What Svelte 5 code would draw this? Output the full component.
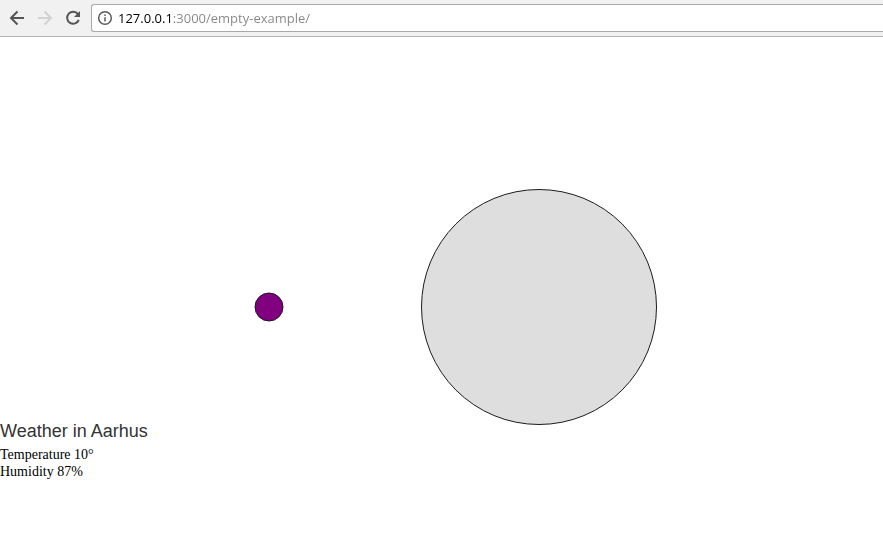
<script>
  let address = $state('127.0.0.1:3000/empty-example/');
  const weather = { city: 'Aarhus', temperature: 10, humidity: 87 };
</script>

<header class="toolbar">
  <nav class="buttons" aria-label="Navigation">
    <button type="button" aria-label="Back">
      <svg viewBox="0 0 16 16" aria-hidden="true">
        <path d="M15 8H2.500M8.500 1.500L2 8L8.500 14.500" />
      </svg>
    </button>
    <button type="button" aria-label="Forward" disabled>
      <svg viewBox="0 0 16 16" aria-hidden="true">
        <path d="M1 8H13.500M7.500 1.500L14 8L7.500 14.500" />
      </svg>
    </button>
    <button type="button" aria-label="Reload">
      <svg viewBox="0 0 16 16" aria-hidden="true">
        <path d="M13 4.200A6 6 0 1 0 13.800 9.800" />
        <path class="solid" d="M15 1V7H9Z" />
      </svg>
    </button>
  </nav>
  <label class="omnibox">
    <svg viewBox="0 0 16 16" role="img" aria-label="Site information">
      <circle cx="8" cy="8" r="6.300" />
      <path d="M8 7.200V11.500M8 4.400V6" />
    </svg>
    <input type="text" aria-label="Address" spellcheck="false" bind:value={address} />
  </label>
</header>

<main>
  <svg class="sketch" role="img" aria-label="Temperature and humidity circles">
    <circle class="temperature" cx="269" cy="270" r="14" />
    <circle class="humidity" cx="539" cy="270" r="117.500" />
  </svg>
  <h1>Weather in {weather.city}</h1>
  <p>Temperature {weather.temperature}°</p>
  <p>Humidity {weather.humidity}%</p>
</main>

<style>
  :global(body) {
    margin: 0;
    background: #fff;
    overflow-x: hidden;
  }
  .toolbar {
    box-sizing: border-box;
    display: flex;
    align-items: center;
    height: 37px;
    padding-left: 9px;
    background: #f1f1f1;
    border-bottom: 1px solid #b4b4b4;
  }
  .buttons {
    display: flex;
    gap: 12px;
    margin-right: 10px;
  }
  button {
    display: flex;
    padding: 0;
    border: 0;
    background: none;
    color: #555;
  }
  button:disabled {
    color: #d2d2d2;
  }
  button svg,
  .omnibox svg {
    width: 16px;
    height: 16px;
    flex: none;
    fill: none;
    stroke: currentColor;
    stroke-width: 2;
  }
  button .solid {
    fill: currentColor;
    stroke: none;
  }
  .omnibox {
    box-sizing: border-box;
    display: flex;
    flex: 1;
    align-items: center;
    gap: 5px;
    height: 28px;
    padding-left: 5px;
    background: #fff;
    border: 1px solid #a9a9a9;
    border-right: 0;
    border-radius: 3px 0 0 3px;
    color: #5a5a5a;
  }
  .omnibox svg {
    stroke-width: 1.500;
  }
  /* The host part is dark, the port and the path are grey. */
  input {
    flex: 1;
    min-width: 0;
    height: 24px;
    padding: 0;
    border: 0;
    outline: 0;
    font: 13px/24px "Open Sans", sans-serif;
    color: transparent;
    caret-color: #000;
    background: linear-gradient(to right, #000 55px, #858585 55px);
    -webkit-background-clip: text;
    background-clip: text;
  }
  main {
    color: #000;
  }
  .sketch {
    display: block;
    width: 100%;
    height: 384px;
    overflow: visible;
  }
  .sketch circle {
    stroke: #1c1c1c;
    stroke-width: 1;
  }
  .sketch .temperature {
    fill: #800080;
  }
  .sketch .humidity {
    fill: #dedede;
  }
  h1 {
    margin: 0 0 5px;
    font: 18px/20px "Liberation Sans", Arial, sans-serif;
    color: #333;
  }
  p {
    margin: 0;
    font: 14px/17px "Liberation Serif", "Times New Roman", serif;
  }
</style>
